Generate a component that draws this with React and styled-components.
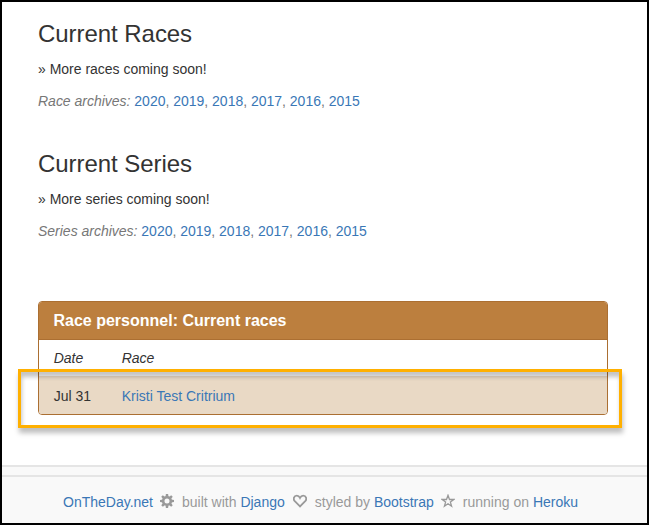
import React from "react";
import styled, { createGlobalStyle } from "styled-components";

const GlobalStyle = createGlobalStyle`
  *, *::before, *::after { box-sizing: border-box; }
  html, body { margin: 0; padding: 0; }
  body {
    font-family: "Liberation Sans", Arial, sans-serif;
    font-size: 14px;
    line-height: 20px;
    color: #333;
    background: #fff;
  }
`;

const Page = styled.div`
  display: flex;
  flex-direction: column;
  width: 649px;
  height: 525px;
  border: 2px solid #000;
  overflow: hidden;
  background: #fff;
`;

const Main = styled.main`
  flex: 1;
  padding: 19px 39px 0 36px;
`;

const Section = styled.section`
  height: 130px;
`;

const Heading = styled.h3`
  margin: 0 0 12px;
  font-size: 24px;
  font-weight: 400;
  line-height: 26px;
  letter-spacing: -0.05px;
`;

const Line = styled.p`
  margin: 0 0 12px;
  white-space: nowrap;
  letter-spacing: -0.01px;
  color: ${(p) => (p.$muted ? "#777" : "#333")};
`;

const Link = styled.a`
  color: #3a77b6;
  text-decoration: none;
`;

const PanelWrap = styled.div`
  position: relative;
  margin-top: 20px;
`;

const Panel = styled.section`
  width: 570px;
  height: 114px;
  border: 1px solid #ab6f32;
  border-radius: 4px;
  overflow: hidden;
`;

const PanelTitle = styled.h4`
  height: 38px;
  margin: 0;
  padding: 0 14.5px;
  font-size: 16px;
  line-height: 37px;
  font-weight: 700;
  color: #fff;
  background: #bc7f3e;
  border-bottom: 1px solid #ab6f32;
`;

const Row = styled.div`
  display: grid;
  grid-template-columns: 68px 1fr;
  height: ${(p) => (p.$head ? "36px" : "38px")};
  padding: 0 14.7px;
  line-height: ${(p) => (p.$head ? "37px" : "41px")};
  font-style: ${(p) => (p.$head ? "italic" : "normal")};
  background: ${(p) => (p.$head ? "#fff" : "#e9d9c5")};
`;

const Highlight = styled.div`
  position: absolute;
  left: -20px;
  top: 68px;
  width: 604px;
  height: 59px;
  border: 3px solid #ffb000;
  box-shadow:
    1px 5px 5px rgba(0, 0, 0, 0.26),
    inset 1px 5px 4px rgba(0, 0, 0, 0.23);
  pointer-events: none;
`;

const Footer = styled.footer`
  height: 58px;
  border-top: 2px solid #e5e5e5;
  background: #f9f9f9;
`;

const FooterBar = styled.div`
  display: flex;
  align-items: center;
  height: 48px;
  margin-top: 8px;
  padding: 4px 0 0 61px;
  border-top: 2px solid #e5e5e5;
  color: #999;
  white-space: pre;
`;

const Icon = styled.svg`
  flex: none;
  width: 14px;
  height: 14px;
  margin: ${(p) => p.$margin};
`;

const YEARS = [2020, 2019, 2018, 2017, 2016, 2015];

const Archives = ({ label }) => (
  <Line $muted>
    <em>{label}</em>{" "}
    {YEARS.map((year, i) => (
      <React.Fragment key={year}>
        {i > 0 && ", "}
        <Link>{year}</Link>
      </React.Fragment>
    ))}
  </Line>
);

const TEETH = [0, 45, 90, 135, 180, 225, 270, 315];

const Gear = () => (
  <Icon viewBox="0 0 14 14" $margin="0 8px 2px 7px">
    <circle cx="7" cy="7" r="3.8" fill="none" stroke="#999" strokeWidth="2.6" />
    {TEETH.map((a) => (
      <path key={a} d="M5.5 2.8 5.9 0h2.2l.4 2.8z" fill="#999" transform={`rotate(${a} 7 7)`} />
    ))}
  </Icon>
);

const Heart = () => (
  <Icon viewBox="0 0 14 14" $margin="0 8px 2px 8px">
    <path
      d="M7 12.4 1.8 7.2C-.2 5.1.9 1.6 3.8 1.6 5.6 1.6 6.5 2.9 7 3.9c.5-1 1.4-2.3 3.2-2.3 2.9 0 4 3.5 2 5.6z"
      fill="none"
      stroke="#999"
      strokeWidth="1.8"
    />
  </Icon>
);

const Star = () => (
  <Icon viewBox="0 0 14 14" $margin="0 8px 2px 7px">
    <path
      d="m7 1.3 1.5 4.2h4.3L9.4 8.1l1.2 4.2L7 9.8l-3.6 2.5 1.2-4.2-3.4-2.6h4.3z"
      fill="none"
      stroke="#999"
      strokeWidth="1.3"
    />
  </Icon>
);

export default function App() {
  return (
    <>
      <GlobalStyle />
      <Page>
        <Main>
          <Section>
            <Heading>Current Races</Heading>
            <Line>» More races coming soon!</Line>
            <Archives label="Race archives:" />
          </Section>
          <Section>
            <Heading>Current Series</Heading>
            <Line>» More series coming soon!</Line>
            <Archives label="Series archives:" />
          </Section>
          <PanelWrap>
            <Panel>
              <PanelTitle>Race personnel: Current races</PanelTitle>
              <Row $head>
                <span>Date</span>
                <span>Race</span>
              </Row>
              <Row>
                <span>Jul 31</span>
                <Link>Kristi Test Critrium</Link>
              </Row>
            </Panel>
            <Highlight />
          </PanelWrap>
        </Main>
        <Footer>
          <FooterBar>
            <Link>OnTheDay.net</Link>
            <Gear />
            <span>built with </span>
            <Link>Django</Link>
            <Heart />
            <span>styled by </span>
            <Link>Bootstrap</Link>
            <Star />
            <span>running on </span>
            <Link>Heroku</Link>
          </FooterBar>
        </Footer>
      </Page>
    </>
  );
}
